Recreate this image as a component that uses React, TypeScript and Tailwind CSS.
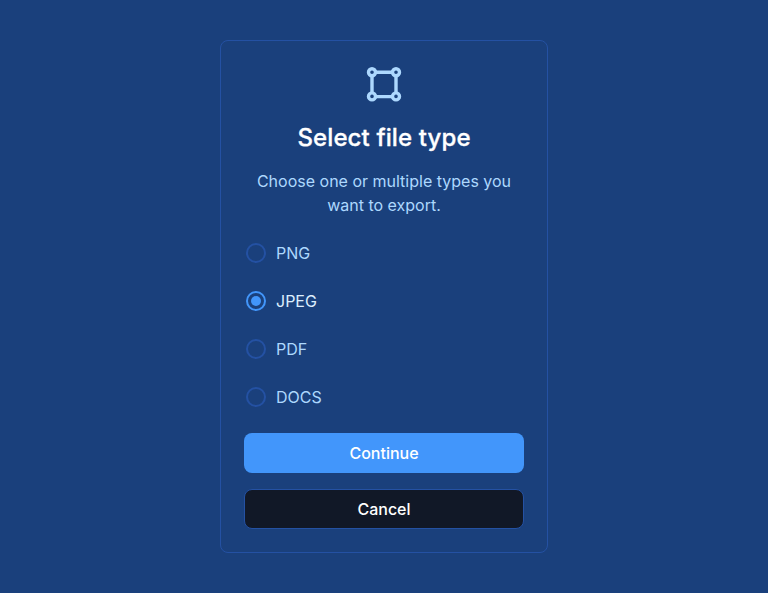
import { useState } from "react";

const types = ["PNG", "JPEG", "PDF", "DOCS"];

function FrameIcon() {
  return (
    <svg width="40" height="40" viewBox="0 0 40 40" fill="none" stroke="#add8fe" strokeWidth="3.4">
      <path d="M11.5 8.3h17M11.5 32.6h17M8 11.8v17M32 11.8v17" />
      <circle cx="8" cy="8.3" r="3.5" />
      <circle cx="32" cy="8.3" r="3.5" />
      <circle cx="8" cy="32.4" r="3.5" />
      <circle cx="32" cy="32.4" r="3.5" />
    </svg>
  );
}

export default function App() {
  const [selected, setSelected] = useState("JPEG");
  return (
    <main className="flex h-[593px] w-full items-start justify-center bg-[#1a407c] pt-10 font-['Inter',sans-serif]">
      <section className="flex h-[513px] w-[328px] flex-col rounded-lg border border-[#2451a3] px-[23px] pt-[23px]">
        <div className="flex h-10 justify-center"><FrameIcon /></div>
        <h1 className="mt-4 text-center text-2xl leading-9 font-medium tracking-[0.12px] text-white [-webkit-text-stroke:0.3px_white]">Select file type</h1>
        <p className="mt-[13px] text-center text-base leading-6 text-[#add8fe]">Choose one or multiple types you<br />want to export.</p>
        <div className="mt-3 flex flex-col">
          {types.map((type) => (
            <button key={type} onClick={() => setSelected(type)} className="flex h-12 items-center gap-[10px] pl-0.5 text-left text-base">
              <span className={`flex size-5 items-center justify-center rounded-full border-2 ${selected === type ? "border-[#4296fb]" : "border-[#2451a3]"}`}>
                {selected === type && <span className="size-2.5 rounded-full bg-[#4296fb]" />}
              </span>
              <span className={selected === type ? "text-[#dceefe]" : "text-[#add8fe]"}>{type}</span>
            </button>
          ))}
        </div>
        <button className="mt-3 h-10 shrink-0 rounded-lg bg-[#4296fb] text-base font-medium text-white">Continue</button>
        <button className="mt-4 h-10 shrink-0 rounded-lg border border-[#2451a3] bg-[#111827] text-base font-medium text-white">Cancel</button>
      </section>
    </main>
  );
}
